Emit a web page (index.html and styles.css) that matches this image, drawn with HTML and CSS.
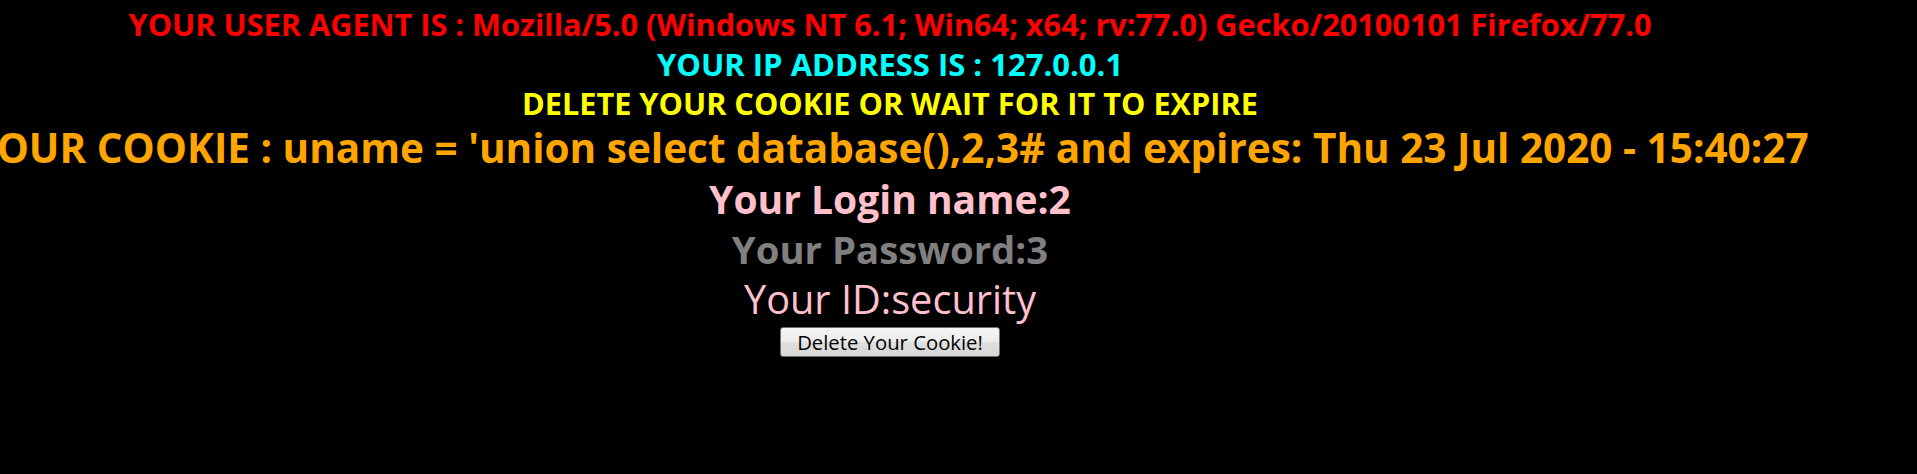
FILE: index.html
```html
<!DOCTYPE html>
<html><head><meta charset="utf-8"><link rel="stylesheet" href="styles.css"></head>
<body>
<div class="page">
  <div class="line ua">YOUR USER AGENT IS : Mozilla/5.0 (Windows NT 6.1; Win64; x64; rv:77.0) Gecko/20100101 Firefox/77.0</div>
  <div class="line ip">YOUR IP ADDRESS IS : 127.0.0.1</div>
  <div class="line del">DELETE YOUR COOKIE OR WAIT FOR IT TO EXPIRE</div>
  <div class="line ck">YOUR COOKIE : uname = 'union select database(),2,3# and expires: Thu 23 Jul 2020 - 15:40:27</div>
  <div class="line login">Your Login name:2</div>
  <div class="line pw">Your Password:3</div>
  <div class="line idl">Your ID:security</div>
  <button class="btn">Delete Your Cookie!</button>
</div>
</body></html>
```
FILE: styles.css
```css
html, body { margin: 0; padding: 0; background: #000; }
body { font-family: "Open Sans", sans-serif; overflow: hidden; }
.page { width: 1780px; padding-top: 5px; display: flex; flex-direction: column; align-items: center; }
.line { white-space: nowrap; font-weight: bold; }
.ua { color: #ff0000; font-size: 30.7px; line-height: 39.5px; }
.ip { color: #00ffff; font-size: 31px; line-height: 39.5px; }
.del { color: #ffff00; font-size: 30.7px; line-height: 39.5px; }
.ck { color: #ffa500; font-size: 40.5px; line-height: 48px; }
.login { color: #ffc0cb; font-size: 39px; line-height: 50px; margin-top: 2px; }
.pw { color: #808080; font-size: 38.3px; line-height: 50px; }
.idl { color: #ffc0cb; font-size: 39.7px; line-height: 50px; font-weight: normal; }
.btn {
  font-family: "Open Sans", sans-serif;
  font-size: 20.3px;
  color: #000;
  height: 30px;
  padding: 0 16px;
  margin-top: 3px;
  border: 1px solid #707070;
  border-radius: 3px;
  background: linear-gradient(#f4f4f4, #ececec 50%, #dfdfdf 51%, #d8d8d8);
}
```
